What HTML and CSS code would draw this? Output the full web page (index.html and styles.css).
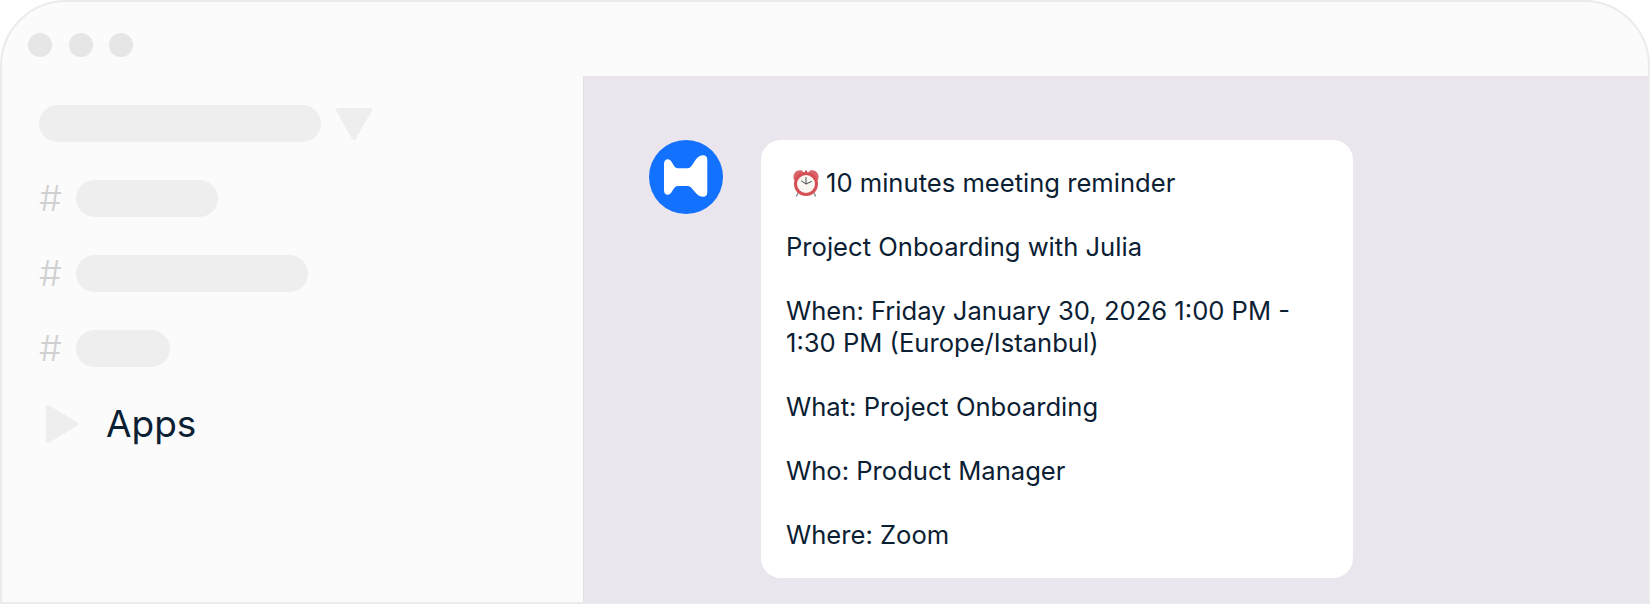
FILE: index.html
```html
<!DOCTYPE html>
<html lang="en">
<head>
<meta charset="utf-8">
<title>Meeting reminder</title>
<link rel="stylesheet" href="styles.css">
</head>
<body>
<div class="window">
  <header class="titlebar">
    <span class="dot"></span><span class="dot"></span><span class="dot"></span>
  </header>
  <div class="main">
    <aside class="sidebar">
      <div class="workspace">
        <span class="pill pill-workspace"></span>
        <svg class="caret" viewBox="0 0 38 34" width="38" height="34"><path d="M3 3H35L19 31Z" fill="#eeeeee" stroke="#eeeeee" stroke-width="4" stroke-linejoin="round"/></svg>
      </div>
      <div class="channel"><span class="hash">#</span><span class="pill pill-a"></span></div>
      <div class="channel"><span class="hash">#</span><span class="pill pill-b"></span></div>
      <div class="channel"><span class="hash">#</span><span class="pill pill-c"></span></div>
      <div class="apps">
        <svg class="play" viewBox="0 0 34 40" width="34" height="40"><path d="M3 3V37L31 20Z" fill="#eeeeee" stroke="#eeeeee" stroke-width="4" stroke-linejoin="round"/></svg>
        <span class="apps-label">Apps</span>
      </div>
    </aside>
    <section class="content">
      <div class="avatar">
        <svg viewBox="0 0 74 74" width="74" height="74"><circle cx="37" cy="37" r="37" fill="#1371ff"/><path d="M15 24C15 19 19 18 21.500 20.500C24 23 25 28.300 29 28.300H39C44 28.300 46 15.300 54 15.300C57 15.300 58.300 17 58.300 20V52C58.300 55 57 56.700 54 56.700C46 56.700 44 46 39 46H29C25 46 24 51 21.500 53.500C19 56 15 55 15 50Z" fill="#fff"/></svg>
      </div>
      <article class="bubble">
        <p class="line"><svg class="clock" viewBox="0 0 28 28" width="28" height="28"><path d="M2 11C0 5 4 0 10 1.500L12 4L4 12Z" fill="#d9656a"/><path d="M26 11C28 5 24 0 18 1.500L16 4L24 12Z" fill="#d9656a"/><path d="M14 1.500V4" stroke="#b9464a" stroke-width="2"/><path d="M6.500 23L4.500 27M21.500 23L23.500 27" stroke="#8f9499" stroke-width="1.500" stroke-linecap="round"/><circle cx="14" cy="15" r="12" fill="#d64f55"/><circle cx="14" cy="15" r="9" fill="#faf7f2"/><path d="M14 8.500V15L19.500 12.500M14 15L9.500 12" stroke="#4a4f55" stroke-width="1" fill="none" stroke-linecap="round"/></svg>10 minutes meeting reminder</p>
        <p class="line">Project Onboarding with Julia</p>
        <p class="line">When: Friday January 30, 2026 1:00 PM -<br>1:30 PM (Europe/Istanbul)</p>
        <p class="line">What: Project Onboarding</p>
        <p class="line">Who: Product Manager</p>
        <p class="line">Where: Zoom</p>
      </article>
    </section>
  </div>
</div>
</body>
</html>
```
FILE: styles.css
```css
* { box-sizing: border-box; }
html, body { margin: 0; padding: 0; }
body {
  width: 1650px;
  height: 604px;
  background: #fff;
  overflow: hidden;
  font-family: Inter, "Liberation Sans", sans-serif;
  color: #0b2033;
}
.window {
  width: 1650px;
  height: 604px;
  display: flex;
  flex-direction: column;
  background: #fbfbfb;
  border: 2px solid #ebebeb;
  border-radius: 66px 66px 0 0;
  overflow: hidden;
}
.titlebar {
  height: 74px;
  flex: none;
  display: flex;
  gap: 16.5px;
  padding: 31px 0 0 26px;
}
.dot {
  width: 24px;
  height: 24px;
  border-radius: 50%;
  background: #e6e6e6;
}
.main {
  flex: 1;
  display: flex;
  min-height: 0;
}
.sidebar {
  width: 582px;
  flex: none;
  border-right: 1px solid #e2e0e6;
  padding: 29px 0 0 37px;
  display: flex;
  flex-direction: column;
}
.pill {
  display: block;
  height: 37px;
  border-radius: 19px;
  background: #eeeeee;
}
.workspace {
  display: flex;
  align-items: center;
  gap: 14px;
  height: 37px;
}
.pill-workspace { width: 282px; }
.channel {
  display: flex;
  align-items: center;
  height: 37px;
  margin-top: 38px;
}
.hash {
  width: 37px;
  font-size: 36px;
  line-height: 37px;
  font-weight: 300;
  color: #d0d0d0;
}
.pill-a { width: 142px; }
.pill-b { width: 232px; }
.pill-c { width: 94px; }
.apps {
  display: flex;
  align-items: center;
  margin-top: 27px;
  padding-left: 6px;
  height: 60px;
}
.play { flex: none; }
.apps-label {
  margin-left: 27px;
  font-size: 37px;
  line-height: 44px;
}
.content {
  flex: 1;
  background: #ebe6ed;
  display: flex;
  align-items: flex-start;
  padding: 64px 0 0 65px;
  gap: 38px;
}
.avatar { width: 74px; height: 74px; flex: none; }
.avatar svg { display: block; }
.bubble {
  width: 592px;
  height: 438px;
  flex: none;
  background: #fff;
  border-radius: 20px;
  padding: 27px 25px 0;
  font-size: 25.6px;
  line-height: 32px;
}
.line { margin: 0 0 32px; }
.clock {
  vertical-align: -5px;
  margin: 0 6px 0 6px;
}
```
